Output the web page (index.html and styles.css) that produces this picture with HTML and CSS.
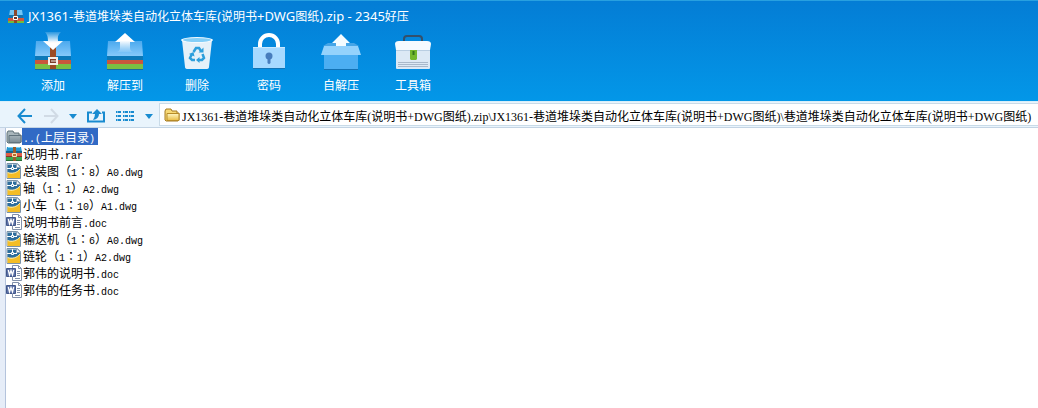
FILE: index.html
```html
<!DOCTYPE html>
<html lang="zh-CN">
<head>
<meta charset="utf-8">
<title>2345好压</title>
<link rel="stylesheet" href="styles.css">
</head>
<body>
<svg class="defs" aria-hidden="true">
  <defs>
    <linearGradient id="lid" x1="0" y1="0" x2="0" y2="1"><stop offset="0" stop-color="#4ba9ee"/><stop offset="1" stop-color="#85c9fa"/></linearGradient>
    <linearGradient id="down" x1="0" y1="0" x2="0" y2="1"><stop offset="0" stop-color="#fff" stop-opacity=".15"/><stop offset=".6" stop-color="#fff"/></linearGradient>
    <linearGradient id="up" x1="0" y1="0" x2="0" y2="1"><stop offset=".4" stop-color="#fff"/><stop offset="1" stop-color="#fff" stop-opacity=".1"/></linearGradient>
    <linearGradient id="gold" x1="0" y1="0" x2="0" y2="1"><stop offset="0" stop-color="#fff7c4"/><stop offset="1" stop-color="#e9bd45"/></linearGradient>
    <linearGradient id="gray" x1="0" y1="0" x2="0" y2="1"><stop offset="0" stop-color="#a5b2b8"/><stop offset="1" stop-color="#7b8c96"/></linearGradient>
    <symbol id="rar" viewBox="0 0 16 16">
      <path d="M1 1h14l1 5H0z" fill="#2596d1"/><path d="M2 1h12v1H2z" fill="#78d0f2"/>
      <path d="M0 5h16v2H0z" fill="#17658f"/><path d="M0 7h16v3H0z" fill="#e25e45"/><path d="M0 10h16v1H0z" fill="#8c3427"/>
      <path d="M0 11h16v4H0z" fill="#3ca650"/><path d="M0 14h16v1H0z" fill="#246d36"/>
      <path d="M7 1h3v14H7z" fill="#9a5c2b"/><path d="M6.500 7.500h4v3h-4z" fill="#b96c2b" stroke="#f4e5bb"/>
    </symbol>
    <symbol id="dwg" viewBox="0 0 16 16">
      <path d="M1 .5h10.500l3 3v12H1z" fill="#fff" stroke="#7b93a8"/>
      <path d="M1.500 1.500H10V5h4v5H1.500z" fill="#2d6d9c"/>
      <path d="M1.500 9.500C6 11 11 10 14 6v9H1.500z" fill="#f4bd26"/>
      <path d="M1.500 9.500C6 11 11 10 14 6" fill="none" stroke="#fff0af"/>
      <path d="M6.500 1v3M1 5.500h4M8 5.500h3" stroke="#fff"/><path d="M5.500 4.500h2v2h-2z" fill="#2d6d9c" stroke="#fff"/>
      <path d="M10.500 1v3.500h4L11 .5z" fill="#f0f4f8" stroke="#8aa0b4"/>
    </symbol>
    <symbol id="doc" viewBox="0 0 16 16">
      <path d="M6.500 .5h6l3 3v12h-9z" fill="#fff" stroke="#8291ab"/><path d="M12.500 .5v3h3" fill="none" stroke="#8291ab"/>
      <path d="M11 6.500h3M11 8.500h3M11 10.500h3M9 13.500h5" stroke="#8291ab"/>
      <path d="M.5 3.500h9v8h-9z" fill="#5b70a5" stroke="#42578a"/><path d="M2.300 5l1.200 5L5 5.500 6.500 10l1.200-5" fill="none" stroke="#fff" stroke-width="1.300"/>
    </symbol>
  </defs>
</svg>
<header class="header">
  <h1 class="title">
    <svg class="logo" viewBox="0 0 16 15"><path d="M2 1h12l1 6H1z" fill="#72c6f5"/><path d="M1 6h14v3H1z" fill="#1275b0"/><path d="M0 9h16v3H0z" fill="#d2573e"/><path d="M0 12h16v2H0z" fill="#75bb3a"/><path d="M6 1h3v13H6z" fill="#8b492e"/><path d="M5.500 7.500h4v3h-4z" fill="#6b3427" stroke="#fff"/></svg>
    <span><span class="ui-latin">JX1361-</span>巷道堆垛类自动化立体车库<span class="ui-latin">(</span>说明书<span class="ui-latin">+DWG</span>图纸<span class="ui-latin">).zip - 2345</span>好压</span>
  </h1>
  <nav class="tools" aria-label="工具栏">
    <button class="tool"><svg class="tool-icon" viewBox="0 0 40 42"><path d="M3 10h34l1 15H2z" fill="url(#lid)"/><path d="M2 25h36v4H2z" fill="#0b78b8"/><path d="M2 29h36v4H2z" fill="#c9573c"/><path d="M2 33h36v5H2z" fill="#7ac043"/><path d="M2 38h36v1H2z" fill="#186c99"/><path d="M17 11h6v27h-6z" fill="#9c4b24"/><path d="M16 27h8v6h-8z" fill="#7d3c2b" stroke="#f6eee9" stroke-width="2"/><path d="M18 30h5" stroke="#f6eee9"/><path d="M12 1h16q-4 3-3 9h5L20 19 10 10h5q0-6-3-9z" fill="url(#down)"/></svg><span>添加</span></button>
    <button class="tool"><svg class="tool-icon" viewBox="0 0 40 42"><path d="M3 10h34l1 15H2z" fill="url(#lid)"/><path d="M2 25h36v4H2z" fill="#0b78b8"/><path d="M2 29h36v4H2z" fill="#c9573c"/><path d="M2 33h36v5H2z" fill="#7ac043"/><path d="M2 38h36v1H2z" fill="#186c99"/><path d="M20 2l10 9h-5v6q0 3 3 4H12q3-1 3-4v-6h-5z" fill="url(#up)"/></svg><span>解压到</span></button>
    <button class="tool"><svg class="tool-icon" viewBox="0 0 40 42"><path d="M5 9h30l-3 27q0 2-3 2H11q-3 0-3-2z" fill="#e5f1f9"/><ellipse cx="20" cy="9" rx="16" ry="3" fill="#f5fbff"/><ellipse cx="20" cy="9" rx="14" ry="2" fill="#84cff8"/><g fill="none" stroke="#2c9fdc" stroke-width="2.500"><path d="M16.500 21l2.500-4h3l2 3M25.500 23l1.500 4-2 2h-3M18 29h-3l-2-2 2-4"/></g><path d="M21.500 21.500h5v-5zM22.500 26v6l-3.500-3zM12 23l4.500-2 1 4.500z" fill="#2c9fdc"/></svg><span>删除</span></button>
    <button class="tool"><svg class="tool-icon" viewBox="0 0 40 42"><path d="M11 16v-3a9 9 0 0 1 18 0v3" fill="none" stroke="#fff" stroke-width="4"/><path d="M4 16h32v21H4z" fill="#a6d9ff"/><path d="M4 16h32v1H4z" fill="#c9e9ff"/><path d="M4 37h32v1H4z" fill="#1274b5"/><circle cx="20" cy="25" r="3.500" fill="#477dbd"/><path d="M18.500 26h3v6q-1.500 2-3 0z" fill="#477dbd"/></svg><span>密码</span></button>
    <button class="tool"><svg class="tool-icon" viewBox="0 0 40 42"><path d="M2 15l5-3h26l5 3z" fill="#45a5e7"/><path d="M20 3l9 9h-4v6H15v-6h-4z" fill="#f5fcff"/><path d="M3 24h34v14H3z" fill="#4caef2"/><path d="M3 15h34l3 9H0z" fill="#94d2fc"/><path d="M3 38h34v1H3z" fill="#1272b5"/></svg><span>自解压</span></button>
    <button class="tool"><svg class="tool-icon" viewBox="0 0 40 42"><path d="M11 12V8q0-3 3-3h12q3 0 3 3v4" fill="none" stroke="#34506b" stroke-width="2"/><path d="M3 19h34v18q0 1-1 1H4q-1 0-1-1z" fill="#dce9f5"/><path d="M2 13q0-3 4-3h28q4 0 4 3l-1 6H3z" fill="#f5faff"/><path d="M3 19.500h34" stroke="#b9cee2"/><path d="M5 31.500h30M5 33.500h30M5 35.500h30" stroke="#a8b8ca"/><path d="M17 19h7v9l-1 1h-5l-1-1z" fill="#72b82e"/><path d="M20.500 20v4" stroke="#35751c" stroke-width="2"/></svg><span>工具箱</span></button>
  </nav>
</header>
<div class="navbar">
  <div class="nav-actions">
    <button class="icon-button" aria-label="后退"><svg class="nav-icon" viewBox="0 0 16 16"><path d="M15 8H2M8 1L1.500 8 8 15" fill="none" stroke="#188bd0" stroke-width="2"/></svg></button>
    <button class="icon-button" aria-label="前进"><svg class="nav-icon" viewBox="0 0 16 16"><path d="M1 8h13M8 1l6.500 7L8 15" fill="none" stroke="#d1dbe5" stroke-width="2"/></svg></button>
    <button class="icon-button" aria-label="历史"><svg class="caret" viewBox="0 0 8 5"><path d="M0 0h8L4 5z" fill="#188bd0"/></svg></button>
    <button class="icon-button" aria-label="向上"><svg class="up-icon" viewBox="0 0 18 16"><path d="M5 4.500H1v9h16v-9h-2" fill="none" stroke="#188bd0" stroke-width="2"/><path d="M10 1l5 5h-3q0 5-6 6 2-3 2-6H5z" fill="#188bd0"/></svg></button>
    <button class="icon-button" aria-label="视图"><svg class="view-icon" viewBox="0 0 20 12"><path d="M1 2h5M8 2h5M14 2h5M1 6h5M8 6h5M14 6h5M1 10h5M8 10h5M14 10h5" stroke="#188bd0" stroke-width="2"/><path d="M2 2h1M9 2h1M15 2h1M2 6h1M9 6h1M15 6h1M2 10h1M9 10h1M15 10h1" stroke="#d8effa"/></svg></button>
    <button class="icon-button" aria-label="视图选项"><svg class="caret" viewBox="0 0 8 5"><path d="M0 0h8L4 5z" fill="#188bd0"/></svg></button>
  </div>
  <label class="address">
    <svg class="file-icon" viewBox="0 0 16 16"><path d="M1 4l1-2h5l1 2h5v2h2v7l-1 1H2l-1-1z" fill="#f7d976" stroke="#a47a20"/><path d="M3 6.500h12v7H3z" fill="url(#gold)" stroke="#b68b29"/></svg>
    <input class="path" aria-label="路径" value="JX1361-巷道堆垛类自动化立体车库(说明书+DWG图纸).zip\JX1361-巷道堆垛类自动化立体车库(说明书+DWG图纸)\巷道堆垛类自动化立体车库(说明书+DWG图纸)">
  </label>
</div>
<main class="files">
  <ul class="list">
    <li class="row"><svg class="file-icon" viewBox="0 0 16 16"><path d="M1 4l1-2h5l1 2h5v2h2v7l-1 1H2l-1-1z" fill="#a8b5bb" stroke="#60727b"/><path d="M3 6.500h12v7H3z" fill="url(#gray)" stroke="#61727c"/></svg><span class="name selected"><span class="mono">..(</span>上层目录<span class="mono">)</span></span></li>
    <li class="row"><svg class="file-icon"><use href="#rar"/></svg><span class="name">说明书<span class="mono">.rar</span></span></li>
    <li class="row"><svg class="file-icon"><use href="#dwg"/></svg><span class="name">总装图<span class="centered" lang="zh-TW">（<span class="mono">1</span>：<span class="mono">8</span>）</span><span class="mono">A0.dwg</span></span></li>
    <li class="row"><svg class="file-icon"><use href="#dwg"/></svg><span class="name">轴<span class="centered" lang="zh-TW">（<span class="mono">1</span>：<span class="mono">1</span>）</span><span class="mono">A2.dwg</span></span></li>
    <li class="row"><svg class="file-icon"><use href="#dwg"/></svg><span class="name">小车<span class="centered" lang="zh-TW">（<span class="mono">1</span>：<span class="mono">10</span>）</span><span class="mono">A1.dwg</span></span></li>
    <li class="row"><svg class="file-icon"><use href="#doc"/></svg><span class="name">说明书前言<span class="mono">.doc</span></span></li>
    <li class="row"><svg class="file-icon"><use href="#dwg"/></svg><span class="name">输送机<span class="centered" lang="zh-TW">（<span class="mono">1</span>：<span class="mono">6</span>）</span><span class="mono">A0.dwg</span></span></li>
    <li class="row"><svg class="file-icon"><use href="#dwg"/></svg><span class="name">链轮<span class="centered" lang="zh-TW">（<span class="mono">1</span>：<span class="mono">1</span>）</span><span class="mono">A2.dwg</span></span></li>
    <li class="row"><svg class="file-icon"><use href="#doc"/></svg><span class="name">郭伟的说明书<span class="mono">.doc</span></span></li>
    <li class="row"><svg class="file-icon"><use href="#doc"/></svg><span class="name">郭伟的任务书<span class="mono">.doc</span></span></li>
  </ul>
</main>
</body>
</html>
```

FILE: styles.css
```css
* { box-sizing: border-box; }
body {
  margin: 0;
  min-height: 100vh;
  display: flex;
  flex-direction: column;
  background: #fff;
  color: #000;
  font: 12px/16px "Noto Sans CJK SC", sans-serif;
}
.defs { position: absolute; width: 0; height: 0; }
button, input { font: inherit; border: 0; padding: 0; background: none; }
.header {
  padding: 7px 0 8px;
  border-top: 1px solid #28a0e0;
  background: linear-gradient(#047dd5, #0397e8);
  color: #fff;
}
.title {
  display: flex;
  align-items: center;
  gap: 4px;
  margin: 0;
  padding-left: 8px;
  height: 16px;
  font-size: 12px;
  font-weight: 400;
  line-height: 16px;
  white-space: nowrap;
}
.ui-latin { font-family: "Noto Sans", sans-serif; font-size: 13px; }
.logo { width: 16px; height: 15px; }
.tools { display: flex; padding-left: 17px; padding-top: 7px; }
.tool {
  width: 72px;
  display: flex;
  flex-direction: column;
  align-items: center;
  gap: 4px;
  color: #fff;
}
.tool-icon { width: 40px; height: 42px; }
.navbar {
  display: flex;
  align-items: stretch;
  height: 27px;
  background: #e9f4fc;
  border-top: 1px solid #d8effa;
  border-bottom: 1px solid #c3d4e4;
}
.nav-actions { display: flex; align-items: center; gap: 10px; width: 159px; padding: 3px 0 0 17px; }
.icon-button { display: flex; }
.nav-icon { width: 16px; height: 16px; }
.caret { width: 8px; height: 5px; }
.up-icon { width: 18px; height: 16px; }
.view-icon { width: 20px; height: 12px; }
.address {
  flex: 1;
  display: flex;
  align-items: center;
  gap: 2px;
  margin: 1px 0;
  padding-left: 4px;
  border: 1px solid #c9dbe8;
  border-right: 0;
  background: #fff;
}
.path {
  flex: 1;
  min-width: 0;
  padding-top: 4px;
  font-family: "Liberation Serif", "Noto Sans CJK SC", serif;
  outline: 0;
}
.files { flex: 1; padding-left: 6px; background: linear-gradient(90deg, #e6edf8 5px, #b4c3dc 5px 6px, #fff 6px); }
.list { list-style: none; margin: 0; padding: 0; }
.row { display: flex; align-items: center; height: 17px; }
.file-icon { width: 16px; height: 16px; flex: none; }
.name { height: 17px; padding: 0 1px; line-height: 17px; white-space: nowrap; }
.selected { padding-right: 3px; background: #316ac5; color: #fff; }
.mono { font-family: "Liberation Mono", monospace; font-size: 10px; }
.centered { font-family: "Noto Sans CJK TC", "Noto Sans CJK SC", sans-serif; }
```
